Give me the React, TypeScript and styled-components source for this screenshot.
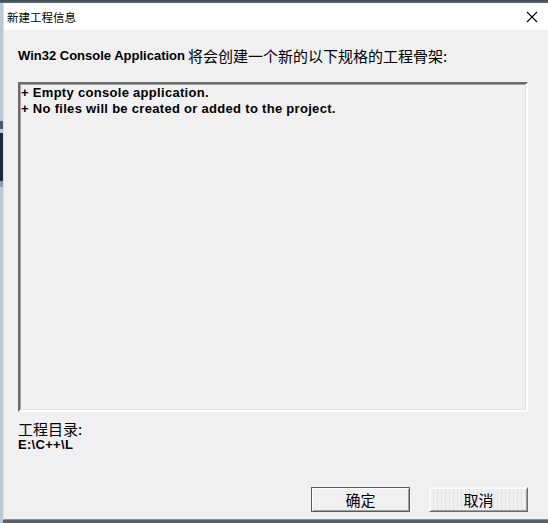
import { FC } from 'react';
import styled, { createGlobalStyle } from 'styled-components';

const GlobalStyle = createGlobalStyle`
  html, body {
    margin: 0;
    padding: 0;
    background: #9fb2c4;
  }
`

const Screen = styled.div`
  width: 548px;
  height: 523px;
  display: flex;
  flex-direction: column;
  overflow: hidden;
  background: #55626e;
`

const TopBand = styled.div`
  height: 3px;
  background: linear-gradient(#3d4650, #5f6d78);
  flex: none;
`

const Row = styled.div`
  flex: 1;
  display: flex;
`

const LeftStrip = styled.div`
  width: 3px;
  display: flex;
  flex-direction: column;
  background: #b9c9d8;
`

const StripPiece = styled.div<{ $h: number; $c: string }>`
  height: ${p => p.$h}px;
  background: ${p => p.$c};
  flex: none;
`

const Window = styled.div`
  flex: 1;
  display: flex;
  flex-direction: column;
  border-left: 1px solid #d6e2ee;
  border-bottom: 1px solid #6f98c0;
  margin-bottom: 3px;
  background: #f0f0f0;
`

const TitleBar = styled.div`
  height: 27px;
  background: #fff;
  display: flex;
  align-items: center;
  justify-content: space-between;
  padding: 0 10px 0 3px;
  font-family: "Noto Sans CJK SC", sans-serif;
  font-size: 11.5px;
  color: #000;
`

const Body = styled.div`
  flex: 1;
  display: flex;
  flex-direction: column;
  padding: 15px 20px 7px 14px;
  color: #000;
`

const Header = styled.div`
  height: 20px;
  display: flex;
  align-items: center;
  white-space: nowrap;
`

const Latin = styled.span`
  font-family: "Liberation Sans", Arial, sans-serif;
  font-weight: bold;
  font-size: 13px;
`

const Cjk = styled.span`
  font-family: "Noto Sans CJK SC", sans-serif;
  font-size: 15px;
  margin-left: 3px;
`

const TextArea = styled.div`
  margin-top: 17px;
  height: 324px;
  border-style: solid;
  border-width: 2px;
  border-color: #6b6b6b #fff #fff #6b6b6b;
  box-shadow: inset -1px -1px 0 #e3e3e3, inset 1px 1px 0 #a0a0a0;
  padding: 1px 1px;
  font-family: "Liberation Sans", Arial, sans-serif;
  font-weight: bold;
  font-size: 13px;
  letter-spacing: 0.3px;
  line-height: 16px;
`

const DirLabel = styled.div`
  margin-top: 8px;
  font-family: "Noto Sans CJK SC", sans-serif;
  font-size: 15px;
  line-height: 17px;
`

const DirPath = styled.div`
  font-family: "Liberation Sans", Arial, sans-serif;
  font-weight: bold;
  font-size: 13px;
  letter-spacing: 0.3px;
  line-height: 15px;
`

const Buttons = styled.div`
  margin-top: auto;
  display: flex;
  justify-content: flex-end;
  gap: 19px;
`

const Button = styled.button<{ $default?: boolean }>`
  width: 99px;
  height: 25px;
  padding: 0;
  font-family: "Noto Sans CJK SC", sans-serif;
  font-size: 15px;
  color: #000;
  border: 1px solid;
  border-color: ${p => (p.$default ? '#5a5a5a' : '#f8f8f8 #6a6a6a #6a6a6a #f8f8f8')};
  box-shadow: inset 1px 1px 0 #fff, inset -1px -1px 0 #a0a0a0;
  background: ${p =>
    p.$default
      ? '#f0f0f0'
      : 'repeating-linear-gradient(90deg, #f0f0f0 0 3px, #e2e2e2 3px 4px)'};
  display: flex;
  align-items: center;
  justify-content: center;
`

const CloseIcon: FC = () => (
  <svg width="12" height="12" viewBox="0 0 12 12">
    <path d="M1 1 L11 11 M11 1 L1 11" stroke="#000" strokeWidth="1.1" fill="none" />
  </svg>
)

export default function App() {
  return (
    <Screen>
      <GlobalStyle />
      <TopBand />
      <Row>
        <LeftStrip>
          <StripPiece $h={118} $c="#b9c9d8" />
          <StripPiece $h={8} $c="#4a5a70" />
          <StripPiece $h={4} $c="#b9c9d8" />
          <StripPiece $h={48} $c="#1c2a44" />
          <StripPiece $h={6} $c="#8aa0b8" />
        </LeftStrip>
        <Window>
          <TitleBar>
            <span>新建工程信息</span>
            <CloseIcon />
          </TitleBar>
          <Body>
            <Header>
              <Latin>Win32 Console Application</Latin>
              <Cjk>将会创建一个新的以下规格的工程骨架:</Cjk>
            </Header>
            <TextArea>
              <div>+ Empty console application.</div>
              <div>+ No files will be created or added to the project.</div>
            </TextArea>
            <DirLabel>工程目录:</DirLabel>
            <DirPath>E:\C++\L</DirPath>
            <Buttons>
              <Button $default>确定</Button>
              <Button>取消</Button>
            </Buttons>
          </Body>
        </Window>
      </Row>
    </Screen>
  );
}
